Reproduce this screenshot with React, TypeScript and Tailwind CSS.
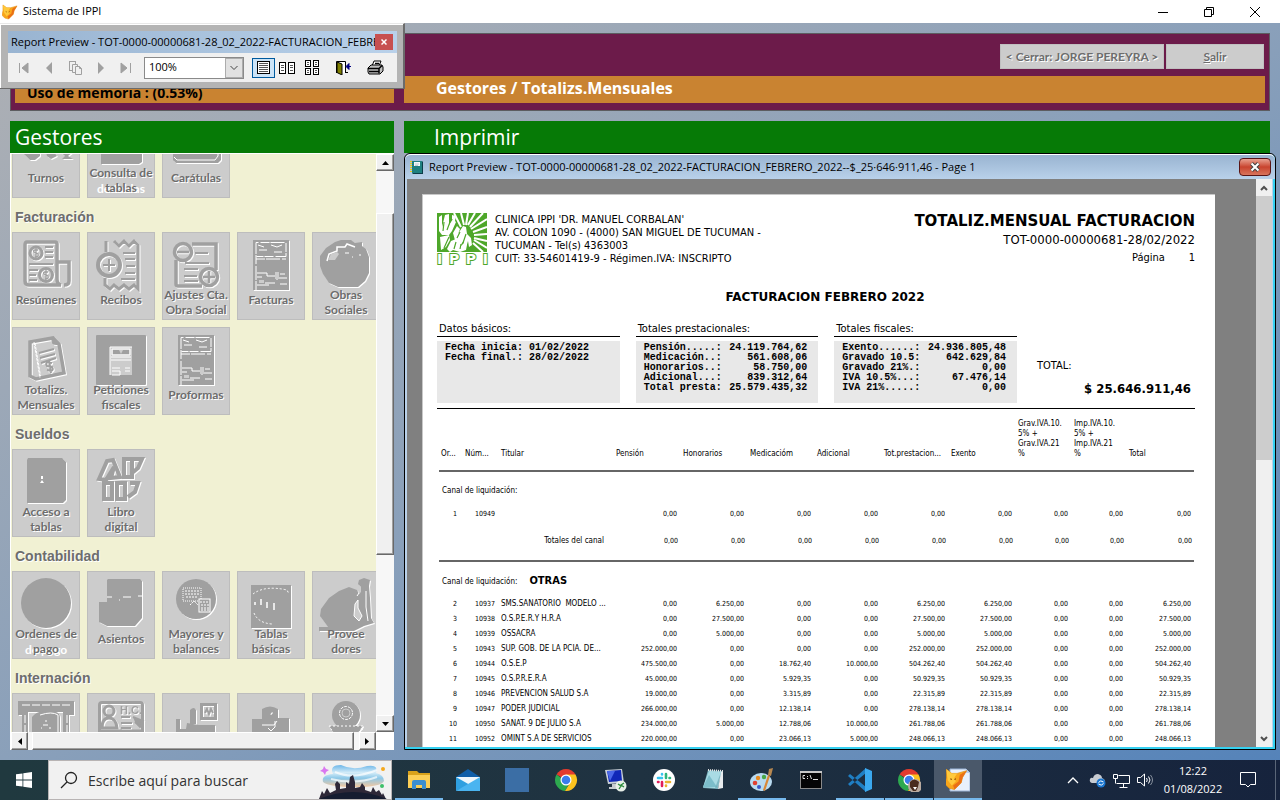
import React from "react";

type Tile = { label: string[]; ghost?: string; icon: React.ReactNode };
type Section = { title?: string; tiles: Tile[] };

const G = "#a0a0a0";
const W = "#ffffff";
const BG = "#cccccc";

const InvoiceIcon = (
  <g>
    <rect x="16" y="8" width="36" height="50" fill={G} />
    <path d="M19 58V10.500h30v14H19.500M19 27h30" fill="none" stroke={W} strokeWidth="1" strokeDasharray="9 1 14 2" />
    <path d="M21 13l6 2M22 18h8M34 13l6 2 5-2M37 20h8M20 41h10v3h10M42 46h8M20 45h5M28 51h10M20 53h12M40 40v8M43 52h7M43 42h5" fill="none" stroke={W} strokeWidth="1" />
    <rect x="38" y="40" width="4" height="7" fill={BG} />
    <rect x="22" y="48" width="5" height="3" fill={BG} />
  </g>
);

const sections: Section[] = [
  {
    tiles: [
      {
        label: ["Turnos"],
        icon: <path d="M12 42h16v4l-5 4h-5l-6-6zM34 42h8l3 4-6 3-4-3zM48 42h13l-5 4 5 3H50l3-3z" fill={G} />,
      },
      {
        label: ["Consulta de", "tablas"],
        ghost: "before:absolute before:inset-x-0 before:top-[16px] before:text-white before:content-['de_tablas']",
        icon: <path d="M14 10h41v42l-3 2H14z" fill={G} />,
      },
      {
        label: ["Carátulas"],
        icon: (
          <g>
            <path d="M11 8h48v42l-3 3H14l-3-3z" fill={G} />
            <path d="M12 47l3 3h38l3-4V30" fill="none" stroke={W} />
          </g>
        ),
      },
    ],
  },
  {
    title: "Facturación",
    tiles: [
      {
        label: ["Resúmenes"],
        icon: (
          <g fill="none" stroke={G}>
            <path d="M45 30V12q0-2-2-2H15q-2 0-2 3v36q0 4 4 4h32q-4-1-4-6V30h12v19q0 4-5 4" strokeWidth="3.5" />
            <circle cx="24" cy="21" r="6" strokeWidth="3" />
            <circle cx="34" cy="43" r="6.500" strokeWidth="3" />
            <path d="M26 18h-3q-2 0-1 2l4 2q1 3-3 3M24 16v10M36 40h-3q-2 0-1 2l4 2q1 3-3 3M34 38v10" strokeWidth="1.300" />
            <path d="M33 15h8M33 20h8M33 25h8M17 32h24M17 38h9M17 43h7M17 48h8" strokeWidth="2" />
          </g>
        ),
      },
      {
        label: ["Recibos"],
        icon: (
          <g fill="none" stroke={G}>
            <path d="M19 20V9M27 9l5 5 5-5 5 5 5-5 4 4V57l-4-4-5 4-5-4-5 4-5-4-4 4-5-4V46" strokeWidth="3" />
            <circle cx="22" cy="33" r="11" strokeWidth="4" />
            <path d="M22 27v12M16 33h12M36 21h12M38 27h10M39 34h9M38 41h10M34 47h14" strokeWidth="2" />
          </g>
        ),
      },
      {
        label: ["Ajustes Cta.", "Obra Social"],
        icon: (
          <g fill="none" stroke={G}>
            <path d="M30 12h24v26M14 28v24q0 2 2 2h24" strokeWidth="3.500" />
            <circle cx="21" cy="20" r="8.500" strokeWidth="3.500" />
            <path d="M15 20h12" strokeWidth="2.500" />
            <circle cx="47" cy="45" r="8.500" strokeWidth="3.500" />
            <path d="M41 45h12M47 39v12" strokeWidth="2.500" />
            <path d="M33 21h13M23 31h24M22 37h14M22 44h13M22 49h14" strokeWidth="2" />
          </g>
        ),
      },
      { label: ["Facturas"], icon: InvoiceIcon },
      {
        label: ["Obras", "Sociales"],
        icon: (
          <g>
            <path d="M23 10l6-2h10l4 3 7-1v4l4 3 3 8v16l-4 8-7 6H26l-9-4-6-9-3-8V24l6-8z" fill={G} />
            <path d="M15 29l2-7 8-3v-4h8l2-3 8 3" fill="none" stroke={W} strokeWidth="1.500" />
            <path d="M16 28l3-6 6-2 2 2-4 6z" fill={BG} />
            <path d="M33 21h4M48 22v2M40 25h1" stroke={W} />
          </g>
        ),
      },
      {
        label: ["Totalizs.", "Mensuales"],
        icon: (
          <g fill="none" stroke={G}>
            <path d="M18 15l23-4 6 6 5 29-28 6-6-3z" strokeWidth="3.500" />
            <path d="M22 15l6 36" stroke={W} strokeWidth="1" strokeDasharray="3 1" />
            <path d="M39 10l2 7 7 1z" fill={G} />
            <path d="M27 26l15-4M28 31l15-4M29 36l15-5" strokeWidth="2" />
            <path d="M40 36l-4-1q-3 1-1 4l5 1q2 3-1 4l-4-1M37 33l2 13" strokeWidth="2" />
          </g>
        ),
      },
      {
        label: ["Peticiones", "fiscales"],
        icon: (
          <g>
            <rect x="9" y="8" width="50" height="50" rx="1" fill={G} />
            <rect x="23" y="20" width="22" height="28" fill={BG} />
            <path d="M23 48V20h22M25 28v-6h18v6zM24 30h20M24 33h20M25 41h8M38 41h5M25 44h8v4h-8M38 44h5" fill="none" stroke={W} />
            <path d="M26 23h6l2 4 2-4h6v4H26z" fill={G} />
          </g>
        ),
      },
      { label: ["Proformas"], icon: InvoiceIcon },
    ],
  },
  {
    title: "Sueldos",
    tiles: [
      {
        label: ["Acceso a", "tablas"],
        icon: (
          <g>
            <path d="M16 9h34l4 4v38l-3 3H15V11z" fill={G} />
            <path d="M29 27h2v3h-2zM28 34l2-3 2 3z" fill={W} />
          </g>
        ),
      },
      {
        label: ["Libro", "digital"],
        icon: (
          <g fill="none" stroke={G} strokeWidth="4">
            <path d="M12 30l8-18 6-1 7 17-9 1 3-11-8 13z" />
            <path d="M37 10h8v18h-8zM47 10h8l-4 9-6 5M17 34h8v16h-8zM30 34h8v16h-8zM43 34h8l-3 9-7 5" />
          </g>
        ),
      },
    ],
  },
  {
    title: "Contabilidad",
    tiles: [
      {
        label: ["Ordenes de", "pago"],
        ghost: "before:absolute before:inset-x-0 before:top-[16px] before:text-white before:content-['de_pago']",
        icon: <circle cx="34" cy="32" r="25" fill={G} />,
      },
      {
        label: ["Asientos"],
        icon: (
          <g>
            <path d="M21 8h32l2 2v37l-7 8H20l-8-4V31h8V9z" fill={G} />
            <path d="M20 26h5M32 29h1M36 26h8M51 25h4" stroke={W} />
          </g>
        ),
      },
      {
        label: ["Mayores y", "balances"],
        icon: (
          <g>
            <circle cx="34" cy="28" r="20" fill={G} />
            <rect x="21" y="17" width="18" height="13" fill="none" stroke={W} strokeDasharray="1 1" />
            <path d="M23 20h14M23 23h14M24 26h12M28 34l4-4 4 4" fill="none" stroke={W} strokeDasharray="2 1" />
            <rect x="37" y="28" width="11" height="13" fill={G} stroke={W} />
            <path d="M38 31h9M39 34h8M39 37h8M39 39h8" stroke={W} strokeDasharray="2 1" />
          </g>
        ),
      },
      {
        label: ["Tablas", "básicas"],
        icon: (
          <g>
            <rect x="14" y="14" width="40" height="43" fill={G} />
            <path d="M16 23q12-9 34-4l2 4" fill="none" stroke={W} strokeDasharray="2 2" />
            <path d="M18 31v3M24 28v6M30 31v6M37 32v7" stroke={W} strokeWidth="1.500" />
            <path d="M17 42q4 10 18 11" fill="none" stroke={W} strokeDasharray="2 2" />
          </g>
        ),
      },
      {
        label: ["Provee", "dores"],
        icon: (
          <g>
            <path d="M8 45l1-7 8-11 10-7 10-4 8 3 2 4 2-2v-5l-3-3 1-4 5-2 6 2-1 6 1 12 1 20 3 5-10 3-10 5H7v-4h9z" fill={G} />
            <path d="M43 33l3-4v8l4 8-3 5-5-5z" fill={BG} stroke={W} />
            <path d="M54 20v16l2 14M45 25l2-3" fill="none" stroke={W} />
          </g>
        ),
      },
    ],
  },
  {
    title: "Internación",
    tiles: [
      {
        label: [],
        icon: (
          <g>
            <path d="M6 8h56v14h-5v34h-6V19H16v37h-6V22H6z" fill={G} />
            <path d="M10 12h48M13 22v34M55 22v34" stroke={W} strokeDasharray="8 2" />
            <path d="M20 24q5-6 12-5h12q4 1 4 6v31H20z" fill={G} />
            <path d="M28 22q12-4 18 0v34M34 27v2M31 32h5M29 35h1M37 35h2" fill="none" stroke={W} />
          </g>
        ),
      },
      {
        label: [],
        icon: (
          <g>
            <path d="M12.500 56V12q0-2.500 2.500-2.500h38q2.500 0 2.500 2.500v44M12 38h44" fill="none" stroke={G} strokeWidth="3" />
            <circle cx="22" cy="18" r="5" fill="none" stroke={G} strokeWidth="3" />
            <path d="M15 35q0-10 7-10t8 10z" fill="none" stroke={G} strokeWidth="3" />
            <text x="33" y="21" fill={G} fontSize="11" fontWeight="700" fontFamily="Liberation Sans, sans-serif">H.C.</text>
            <path d="M34 24h9M34 30h11M34 35h10M46 24l10 4-3 6-5-5" fill={G} stroke={G} strokeWidth="2" />
          </g>
        ),
      },
      {
        label: [],
        icon: (
          <g>
            <path d="M14 26h4v10h6l1-6 12 2h16v24H14z" fill={G} />
            <path d="M28 17q4-4 6 0v14h-6z" fill={G} />
            <rect x="39.500" y="11.500" width="14" height="14" fill="none" stroke={G} strokeWidth="3" />
            <path d="M43 20l2-4 2 5 2-5 2 4" fill="none" stroke={G} strokeWidth="2" />
          </g>
        ),
      },
      {
        label: [],
        icon: (
          <g>
            <path d="M25 16q8-5 16 0v9h11v31H15V26h10z" fill={G} />
            <path d="M25 32h12l3-4M31 35l3 3 4-4v-6M34 22q0-3 2-2" fill="none" stroke={W} />
          </g>
        ),
      },
      {
        label: [],
        icon: (
          <g>
            <circle cx="34" cy="22" r="14" fill={G} />
            <circle cx="34" cy="20" r="6.500" fill={G} stroke={W} strokeDasharray="3 1" />
            <circle cx="34" cy="20" r="4" fill={G} stroke={BG} />
            <path d="M17 33h34l-4 6 4 6H17l4-6z" fill={G} stroke={W} strokeDasharray="2 2" />
          </g>
        ),
      },
    ],
  },
];

function TileButton({ tile }: { tile: Tile }) {
  const single = tile.label.length === 1;
  return (
    <button className="flex h-[88px] w-[68px] shrink-0 flex-col border border-[#bdbdbd] bg-[#cccccc]">
      <svg viewBox="1 1 66 54" className="h-[54px] w-full shrink-0 overflow-visible [filter:drop-shadow(1px_1px_0_#fff)]">
        {tile.icon}
      </svg>
      <div className={"relative w-full text-center font-[Lato,sans-serif] text-[12px] leading-[15px] font-bold whitespace-nowrap text-[#6d6d6d] " + (single ? "pt-[5px] " : "") + (tile.ghost ?? "")}>
        <div className="relative [text-shadow:1px_1px_0_#fff]">
          {tile.label.map((l) => (
            <div key={l}>{l}</div>
          ))}
        </div>
      </div>
    </button>
  );
}

const bevel = "flex items-center justify-center bg-[#f0f0f0] border border-t-white border-l-white border-r-[#696969] border-b-[#696969] shadow-[inset_-1px_-1px_0_#a0a0a0]";

function Gestores() {
  return (
    <section className="flex w-96 shrink-0 flex-col overflow-hidden">
      <h2 className="h-8 shrink-0 bg-[#067a06] pl-[5px] font-['Open_Sans',sans-serif] text-[21px] leading-8 text-white">Gestores</h2>
      <div className="flex min-h-0 flex-1 border-t border-l border-white bg-[#f1f1d3]">
        <div className="flex min-w-0 flex-1 flex-col">
          <div className="min-h-0 flex-1 overflow-hidden pl-px">
            <div className="-mt-11 flex w-[368px] flex-col">
              {sections.map((s, i) => (
                <div key={i}>
                  {s.title && (
                    <h3 className="flex h-[34px] items-center pl-[3px] pt-1 font-['Liberation_Sans',sans-serif] text-[14px] leading-4 font-bold text-[#6d6d6d] [text-shadow:1px_1px_0_#fff]">
                      {s.title}
                    </h3>
                  )}
                  <div className="flex flex-wrap gap-[7px]">
                    {s.tiles.map((t, j) => (
                      <TileButton key={j} tile={t} />
                    ))}
                  </div>
                </div>
              ))}
            </div>
          </div>
          <div className="flex h-[18px] shrink-0 bg-[#f7f7f7]">
            <button aria-label="Desplazar a la izquierda" className={bevel + " w-[17px]"}>
              <svg width="5" height="7"><path d="M5 0v7L1 3.500z" fill="#000" /></svg>
            </button>
            <div className={bevel + " mr-[5px] ml-1 flex-1"} />
            <button aria-label="Desplazar a la derecha" className={bevel + " w-[17px]"}>
              <svg width="5" height="7"><path d="M0 0v7l4-3.500z" fill="#000" /></svg>
            </button>
          </div>
        </div>
        <div className="flex w-[18px] shrink-0 flex-col bg-[#f7f7f7]">
          <button aria-label="Desplazar arriba" className={bevel + " h-[17px]"}>
            <svg width="7" height="4"><path d="M0 4h7L3.500 0z" fill="#000" /></svg>
          </button>
          <div className="h-[42px]" />
          <div className={bevel + " flex-1"} />
          <div className="h-40" />
          <button aria-label="Desplazar abajo" className={bevel + " h-[17px]"}>
            <svg width="7" height="4"><path d="M0 0h7L3.500 4z" fill="#000" /></svg>
          </button>
          <div className="h-[18px] bg-white" />
        </div>
      </div>
    </section>
  );
}

const z = "0,00";
const rows: string[][] = [
  ["2", "10937", "SMS.SANATORIO  MODELO ...", z, "6.250,00", z, z, "6.250,00", "6.250,00", z, z, "6.250,00"],
  ["3", "10938", "O.S.P.E.R.Y H.R.A", z, "27.500,00", z, z, "27.500,00", "27.500,00", z, z, "27.500,00"],
  ["4", "10939", "OSSACRA", z, "5.000,00", z, z, "5.000,00", "5.000,00", z, z, "5.000,00"],
  ["5", "10943", "SUP. GOB. DE LA PCIA. DE...", "252.000,00", z, z, z, "252.000,00", "252.000,00", z, z, "252.000,00"],
  ["6", "10944", "O.S.E.P", "475.500,00", z, "18.762,40", "10.000,00", "504.262,40", "504.262,40", z, z, "504.262,40"],
  ["7", "10945", "O.S.P.R.E.R.A", "45.000,00", z, "5.929,35", z, "50.929,35", "50.929,35", z, z, "50.929,35"],
  ["8", "10946", "PREVENCION SALUD S.A", "19.000,00", z, "3.315,89", z, "22.315,89", "22.315,89", z, z, "22.315,89"],
  ["9", "10947", "PODER JUDICIAL", "266.000,00", z, "12.138,14", z, "278.138,14", "278.138,14", z, z, "278.138,14"],
  ["10", "10950", "SANAT. 9 DE JULIO S.A", "234.000,00", "5.000,00", "12.788,06", "10.000,00", "261.788,06", "261.788,06", z, z, "261.788,06"],
  ["11", "10952", "OMINT S.A DE SERVICIOS", "220.000,00", z, "23.066,13", "5.000,00", "248.066,13", "248.066,13", z, z, "248.066,13"],
];
const zeros = [z, z, z, z, z, z, z, z, z];
const heads = ["Or...", "Núm...", "Titular", "Pensión", "Honorarios", "Medicacióm", "Adicional", "Tot.prestacion...", "Exento", "Grav.IVA.10.\n5% +\nGrav.IVA.21\n%", "Imp.IVA.10.\n5% +\nImp.IVA.21\n%", "Total"];

function Row({ cells }: { cells: string[] }) {
  return (
    <tr className="h-[15px]">
      {cells.map((c, i) => (
        <td key={i} className={i === 2 ? "text-[8px] whitespace-pre" : i === 11 ? "pr-[3px] text-right" : "pr-[6px] text-right"}>
          {c}
        </td>
      ))}
    </tr>
  );
}

function SummaryBox({ title, lines }: { title: string; lines: [string, string][] }) {
  return (
    <div className="flex-1">
      <div className="h-4 border-b border-black px-[2px] text-[11px] leading-4">{title}</div>
      <dl className="mt-1 h-[62px] bg-[#e8e8e8] pt-[2px] pr-[11px] pl-2 font-['Liberation_Mono',monospace] text-[10px] leading-[10px] font-bold">
        {lines.map(([a, b]) => (
          <div key={a} className="flex justify-between">
            <dt>{a}</dt>
            <dd>{b}</dd>
          </div>
        ))}
      </dl>
    </div>
  );
}

function Report() {
  return (
    <article className="mt-[15px] mr-[41px] ml-[15px] min-w-0 flex-1 overflow-hidden border-t border-l border-[#c8c8c8] bg-white pt-[18px] pr-5 pl-[14px] font-['DejaVu_Sans_Condensed','DejaVu_Sans',sans-serif] text-black">
      <header className="flex h-14">
        <div className="w-[51px] shrink-0">
          <svg viewBox="0 0 50 39" className="h-[39px] w-[50px]">
            <rect width="50" height="39" fill="#4ea72a" />
            <path d="M24 14L17 0M27 12L24 0M29 12L31 0M31 12L38 0M33 14L46 0M34 16L50 6M36 19l14-5M37 22l13-1M37 25l13 3M37 27l13 8M36 30l10 9" stroke="#fff" strokeWidth="2" />
            <path d="M2 18V4l3-2v12l3-12 4-1v11l4-6 3 3-4 9-3 4H5zM15 2l4 1-1 5-3-2z" fill="#fff" />
            <path d="M16 20l4-7 3 3-2 5 5-8 3 1 1 7 4 4 1 7-3 2-1-6-2 7-3-1 1-7-4 6-4-2zM3 24l9-2 1 5-4 7-5 3zM14 28l5-2 1 4 2-3 3 1-1 5 3-3 3 2-1 5-6 2-7-2-3 2-3-3z" fill="#fff" />
            <path d="M6 18l1-9M10 17l3-8M20 25l3-6M26 30l3-9M7 35l5-11M17 36l2-7M23 36l1-5" fill="none" stroke="#4ea72a" strokeWidth="1.200" />
          </svg>
          <div className="flex justify-between font-['DejaVu_Sans',sans-serif] text-[14px] leading-[15px] font-bold text-white [-webkit-text-stroke:2px_#4ea72a] [paint-order:stroke_fill]">
            <span>I</span>
            <span>P</span>
            <span>P</span>
            <span>I</span>
          </div>
        </div>
        <address className="pl-[7px] text-[11px] leading-[13px] whitespace-nowrap not-italic">
          CLINICA IPPI 'DR. MANUEL CORBALAN'
          <br />
          AV. COLON 1090 - (4000) SAN MIGUEL DE TUCUMAN -
          <br />
          TUCUMAN - Tel(s) 4363003
          <br />
          CUIT: 33-54601419-9 - Régimen.IVA: INSCRIPTO
        </address>
        <div className="ml-auto text-right whitespace-nowrap">
          <h1 className="font-['DejaVu_Sans',sans-serif] text-[15px] leading-[17px] font-bold">TOTALIZ.MENSUAL FACTURACION</h1>
          <p className="text-[13px] leading-5">TOT-0000-00000681-28/02/2022</p>
          <p className="text-[11px] leading-4">
            Página <span className="inline-block w-[27px]">1</span>
          </p>
        </div>
      </header>
      <h2 className="mt-[18px] pl-[18px] text-center font-['DejaVu_Sans',sans-serif] text-[12px] leading-5 font-bold">FACTURACION FEBRERO 2022</h2>
      <div className="mt-[14px] flex h-[88px] gap-4 border-b border-black">
        <SummaryBox title="Datos básicos:" lines={[["Fecha inicia: 01/02/2022", ""], ["Fecha final.: 28/02/2022", ""]]} />
        <SummaryBox title="Totales prestacionales:" lines={[["Pensión.....:", "24.119.764,62"], ["Medicación..:", "561.608,06"], ["Honorarios..:", "58.750,00"], ["Adicional...:", "839.312,64"], ["Total presta:", "25.579.435,32"]]} />
        <SummaryBox title="Totales fiscales:" lines={[["Exento......:", "24.936.805,48"], ["Gravado 10.5:", "642.629,84"], ["Gravado 21%.:", "0,00"], ["IVA 10.5%...:", "67.476,14"], ["IVA 21%.....:", "0,00"]]} />
        <div className="w-[162px] shrink-0 pt-[38px] pl-1">
          <p className="text-[11px] leading-[14px]">TOTAL:</p>
          <p className="mt-2 pr-1 text-right text-[13px] leading-4 font-bold whitespace-pre">$ 25.646.911,46</p>
        </div>
      </div>
      <div className="pr-px pl-[2px]">
        <table className="w-full table-fixed text-[7px] leading-[10px] whitespace-nowrap">
          <colgroup>
            <col className="w-[24px]" />
            <col className="w-[38px]" />
            <col className="w-[115px]" />
            <col />
            <col />
            <col />
            <col />
            <col />
            <col />
            <col className="w-[56px]" />
            <col className="w-[55px]" />
            <col className="w-[65px]" />
          </colgroup>
          <thead>
            <tr className="h-[62px] border-b-2 border-[#666]">
              {heads.map((h, i) => (
                <th key={i} scope="col" className={"pb-[11px] text-left align-bottom text-[8px] leading-[10px] font-normal whitespace-pre " + (i < 2 ? "pl-[2px]" : "")}>
                  {h}
                </th>
              ))}
            </tr>
          </thead>
          <tbody>
            <tr className="h-[35px]">
              <td colSpan={12} className="pt-1 pl-[3px] text-[8px]">Canal de liquidación:</td>
            </tr>
            <Row cells={["1", "10949", "", ...zeros]} />
            <tr className="h-10 border-b-2 border-[#666]">
              <td colSpan={3} className="pr-3 text-right text-[8px]">Totales del canal</td>
              {zeros.map((c, i) => (
                <td key={i} className={i === 8 ? "pr-[2px] text-right" : "pr-[5px] text-right"}>{c}</td>
              ))}
            </tr>
            <tr className="h-[35px]">
              <td colSpan={12} className="pt-1 pl-[3px] text-[8px]">
                Canal de liquidación:
                <b className="pl-3 text-[11px]">OTRAS</b>
              </td>
            </tr>
            {rows.map((r) => (
              <Row key={r[1]} cells={r} />
            ))}
          </tbody>
        </table>
      </div>
    </article>
  );
}

const reportName = "Report Preview - TOT-0000-00000681-28_02_2022-FACTURACION_FEBRERO_2022--$_25·646·911,46 - Page 1";

function Imprimir() {
  return (
    <section className="flex min-w-0 flex-1 flex-col">
      <h2 className="mr-[6px] h-8 shrink-0 bg-[#067a06] pl-[30px] font-['Open_Sans',sans-serif] text-[21px] leading-8 text-white">Imprimir</h2>
      <div className="flex min-h-0 flex-1 flex-col overflow-hidden rounded-t-md border border-black bg-[#b9d1ea] shadow-[inset_-2px_-2px_0_#35d0f0]">
        <div className="flex h-[25px] shrink-0 items-center rounded-t-md border-t border-white bg-linear-to-b from-[#99b4d1] to-[#b9d1ea] pr-1 pl-1 font-['Open_Sans',sans-serif] text-[11px]">
          <svg viewBox="0 0 16 16" className="h-4 w-4">
            <path d="M3 2h10v12H3z" fill="#1f8080" />
            <path d="M13 2l1 1v12H4l-1-1h10z" fill="#0c3c48" />
            <path d="M5 3h6v4H5z" fill="#f4fafa" />
            <path d="M6 5h4M6 6.500h3" stroke="#9ab" strokeWidth=".6" />
            <path d="M2 2v12" stroke="#e8cc10" strokeWidth="2" strokeDasharray="1 1" />
          </svg>
          <span className="min-w-0 flex-1 truncate pl-1">{reportName}</span>
          <button aria-label="Cerrar vista previa" className="flex h-[18px] w-8 items-center justify-center rounded-sm border border-[#5a1515] bg-linear-to-b from-[#e8a090] via-[#c8432e] to-[#d8745c]">
            <svg width="12" height="10" viewBox="0 0 12 10"><path d="M2.500 1.500l7 7M9.500 1.500l-7 7" stroke="#444" strokeWidth="4" /><path d="M2.500 1.500l7 7M9.500 1.500l-7 7" stroke="#fff" strokeWidth="2" /></svg>
          </button>
        </div>
        <div className="mr-[3px] mb-[2px] ml-[2px] flex min-h-0 flex-1 bg-[#808080]">
          <Report />
          <div className="flex w-4 shrink-0 flex-col bg-[#f0f0f0]">
            <button aria-label="Subir" className="flex h-[17px] items-center justify-center">
              <svg width="8" height="6" viewBox="0 0 8 6"><path d="M1 5l3-3 3 3" fill="none" stroke="#505050" strokeWidth="2" /></svg>
            </button>
            <div className="h-[264px] bg-[#cdcdcd]" />
            <button aria-label="Bajar" className="mt-auto flex h-[17px] items-center justify-center">
              <svg width="8" height="6" viewBox="0 0 8 6"><path d="M1 1l3 3 3-3" fill="none" stroke="#505050" strokeWidth="2" /></svg>
            </button>
          </div>
        </div>
      </div>
    </section>
  );
}

function PageGlyph({ x, y, w, h }: { x: number; y: number; w: number; h: number }) {
  return <rect x={x + 0.5} y={y + 0.5} width={w} height={h} fill="#fff" stroke="#000" />;
}

function PreviewToolbar() {
  const tool = "flex h-5 w-[25px] items-center justify-center";
  return (
    <div className="absolute top-0 left-0 w-[405px] border-t border-r-2 border-b border-t-[#e8e8e8] border-r-[#6b6b6b] border-b-[#6b6b6b] bg-[#b4b4b4] pt-[7px] pr-[6px] pb-[6px] pl-[8px] font-['Open_Sans',sans-serif] text-[11px] shadow-[inset_1px_1px_0_#fff]">
      <div className="flex h-[22px] items-center bg-linear-to-r from-[#99b4d1] to-[#b9d1ea] pr-1 pl-[3px]">
        <span className="min-w-0 flex-1 overflow-hidden whitespace-nowrap">{reportName}</span>
        <button aria-label="Cerrar" className="flex h-4 w-[18px] shrink-0 items-center justify-center bg-[#c75050]">
          <svg width="6" height="6"><path d="M.5.5l5 5M5.500.5l-5 5" stroke="#fff" strokeWidth="1.500" /></svg>
        </button>
      </div>
      <div className="flex h-[29px] items-center bg-[#f0f0f0] pl-[3px]">
        <button aria-label="Primera" className={tool}>
          <svg width="12" height="12"><path d="M1.500 1v10M10 1v10L4 6z" fill={G} stroke={G} strokeWidth="1" /></svg>
        </button>
        <button aria-label="Anterior" className={tool}>
          <svg width="8" height="12"><path d="M7 0v12L1 6z" fill={G} /></svg>
        </button>
        <button aria-label="Ir a página" className={tool + " ml-[2px]"}>
          <svg width="14" height="14" fill="#f0f0f0" stroke={G}><rect x=".5" y=".5" width="6" height="9" /><path d="M3.500 3.500h5v8h-5z" /><path d="M6.500 5.500h4l2 2v6h-6zM10.500 5.500v2h2" /></svg>
        </button>
        <button aria-label="Siguiente" className={tool}>
          <svg width="8" height="12"><path d="M1 0v12l6-6z" fill={G} /></svg>
        </button>
        <button aria-label="Última" className={tool}>
          <svg width="12" height="12"><path d="M10.500 1v10M1 1v10l6-5z" fill={G} stroke={G} strokeWidth="1" /></svg>
        </button>
        <div className="relative ml-[6px]">
          <select aria-label="Zoom" defaultValue="100%" className="h-[22px] w-[100px] appearance-none border border-[#8a8a8a] bg-white pl-1">
            <option>100%</option>
          </select>
          <div className="pointer-events-none absolute top-px right-px flex h-5 w-[18px] items-center justify-center border border-[#acacac] bg-[#e1e1e1]">
            <svg width="8" height="6"><path d="M.5 1l3.500 3.500L7.500 1" fill="none" stroke="#444" /></svg>
          </div>
        </div>
        <button aria-label="Una página" className="ml-2 flex h-5 w-[23px] items-center justify-center border border-[#005a9e] bg-[#cce4f7]">
          <svg width="13" height="13"><PageGlyph x={0} y={0} w={12} h={12} /><path d="M2 2.500h9M2 4.500h9M2 6.500h9M2 8.500h9M2 10.500h9" stroke="#555" /></svg>
        </button>
        <button aria-label="Dos páginas" className={tool}>
          <svg width="17" height="12"><PageGlyph x={0} y={0} w={6} h={11} /><PageGlyph x={9} y={0} w={6} h={11} /><path d="M2 3.500h3M2 5.500h3M2 8.500h3M11 3.500h3M11 5.500h3M11 8.500h3" stroke="#555" /></svg>
        </button>
        <button aria-label="Cuatro páginas" className={tool}>
          <svg width="15" height="15"><PageGlyph x={0} y={0} w={5} h={6} /><PageGlyph x={8} y={0} w={5} h={6} /><PageGlyph x={0} y={8} w={5} h={6} /><PageGlyph x={8} y={8} w={5} h={6} /><path d="M2 2.500h2M2 4.500h2M10 2.500h2M10 4.500h2M2 10.500h2M2 12.500h2M10 10.500h2M10 12.500h2" stroke="#555" /></svg>
        </button>
        <button aria-label="Cerrar vista" className={tool + " ml-[6px]"}>
          <svg width="16" height="14"><path d="M.5 12V.5h9V12" fill="#fff" stroke="#000" /><path d="M1 1l5 2v11l-5-2.500z" fill="#808000" stroke="#000" /><path d="M11 5.500h4M13 2.500L10 5.500l3 3z" fill="#000080" stroke="#000080" /><path d="M9 11.500h3" stroke="#000" /></svg>
        </button>
        <button aria-label="Imprimir" className={tool + " ml-[7px]"}>
          <svg width="17" height="15"><path d="M5 6l2-5h7l-2 5z" fill="#fff" stroke="#000" /><path d="M1 8l3-3h11l1 2v4l-3 3H2l-1-2z" fill="#c0c0c0" stroke="#000" /><path d="M1 8.500h11l3-3M2 11.500h10v2M12 9v3M8 3.500h4" fill="none" stroke="#000" strokeWidth="1.500" /></svg>
        </button>
      </div>
    </div>
  );
}

const Fox = (
  <g>
    <path d="M1 1l4 3h4l7-2-3 5-1 4-5 5-4-1-3-3 1-5z" fill="#f9a61a" stroke="#e08a10" strokeWidth=".5" />
    <path d="M16 2l-3 5-1 4-5 5-1-3 4-3 1-5z" fill="#ea6f16" />
    <path d="M1 1l4 3h4L7 7l1 3-3 3-3-4z" fill="#ffc93c" />
    <path d="M4 8l1 .5M7 8.500l1-.5" stroke="#7a3c00" strokeWidth=".8" />
  </g>
);

function ChromeMark() {
  return (
    <g>
      <path d="M12 12L2.500 6.500A11 11 0 0 1 21.500 6.500z" fill="#e33b2e" />
      <path d="M12 12h-2L2.500 6.500A11 11 0 0 0 11 23l5-9z" fill="#2da94f" />
      <path d="M12 6.500h9.500A11 11 0 0 1 11 23l5.500-9z" fill="#fcc31e" />
      <circle cx="12" cy="12" r="5.500" fill="#fff" />
      <circle cx="12" cy="12" r="4.300" fill="#3b7ded" />
    </g>
  );
}

const taskIcons: { name: string; open?: boolean; active?: boolean; icon: React.ReactNode }[] = [
  {
    name: "Explorador de archivos", open: true,
    icon: <g><path d="M1 3h9l2 2h11v3H1z" fill="#d9a21b" /><path d="M1 7h22v13H1z" fill="#fccf56" /><path d="M5 21v-7q0-2 2-2h10q2 0 2 2v7h-4v-4H9v4z" fill="#3c8fd0" /></g>,
  },
  {
    name: "Correo",
    icon: <g><path d="M0 9l12-8 12 8v4H0z" fill="#0f5ea8" /><path d="M0 9h24v8H0z" fill="#eef6fb" /><path d="M0 9l14 8L0 23z" fill="#2f9fe0" /><path d="M24 9L0 23h24z" fill="#4ab4f0" /></g>,
  },
  { name: "Aplicación", icon: <rect width="24" height="24" fill="#3b6ea5" /> },
  { name: "Chrome", icon: <ChromeMark /> },
  {
    name: "Escritorio remoto",
    icon: <g><path d="M2 2l17-1 2 14-16 1z" fill="#c9d0d8" /><path d="M4 3l14-1 1 11-13 1z" fill="#1028b8" /><path d="M4 3h8L7 13z" fill="#4a68e8" /><path d="M9 16h5v3h5v2H6v-2h3z" fill="#c8ccd0" /><circle cx="18" cy="18" r="5.500" fill="#e8f0e8" /><path d="M15 16l3 2-2 3M21 15l-3 2 3 2" fill="none" stroke="#2a8a3a" strokeWidth="1.300" /></g>,
  },
  {
    name: "Slack",
    icon: (
      <g fill="none" strokeWidth="2.600" strokeLinecap="round">
        <circle cx="12" cy="12" r="11" fill="#fff" />
        <path d="M10 6v.500M6 10h4" stroke="#36c5f0" />
        <path d="M14 6v4M18 10h-.500" stroke="#2eb67d" />
        <path d="M14 14h4M14 18v-.500" stroke="#ecb22e" />
        <path d="M6 14h.500M10 14v4" stroke="#e01e5a" />
      </g>
    ),
  },
  {
    name: "Bloc de notas",
    icon: <g><path d="M7 2l14 1-4 18-15-1z" fill="#7fb8c4" /><path d="M8 3l12 1-6 16-12-1z" fill="#a9dbe4" /><path d="M22 3v17l-5 1 3-17z" fill="#e8ecee" /><path d="M7 2l15 1" stroke="#e8e8e8" strokeWidth="2" strokeDasharray="1 1" /><path d="M2 19l6-12 8 12z" fill="#4f9fb0" opacity=".5" /></g>,
  },
  {
    name: "Paint", open: true,
    icon: <g><ellipse cx="11" cy="14" rx="11" ry="9" fill="#b8daf0" /><circle cx="5" cy="15" r="2.300" fill="#e04030" /><circle cx="8" cy="10" r="2.200" fill="#e88a20" /><circle cx="14" cy="9" r="2.200" fill="#48a848" /><circle cx="9" cy="19" r="2" fill="#3858c8" /><path d="M13 22l5-15 2 1-5 15z" fill="#d88838" /><path d="M18 7l1-6 4-1-2 8z" fill="#b88850" /></g>,
  },
  {
    name: "Símbolo del sistema",
    icon: <g><rect x="1.500" y="3.500" width="21" height="17" fill="#050505" stroke="#8a8a8a" /><path d="M1 4h22" stroke="#c8c8c8" strokeWidth="2" /><path d="M6 7.500H4v3h2M8.500 8v1M8.500 10v1M11 7l1.500 4M14 11.500h5" stroke="#ddd" fill="none" /></g>,
  },
  {
    name: "Visual Studio Code", open: true,
    icon: <g><path d="M0 8l2-2 16 13v5zM0 16l2 2L18 5V0z" fill="#1f7fc4" /><path d="M17 0l7 3v18l-7 3z" fill="#3ba9f0" /></g>,
  },
  {
    name: "Chrome, perfil", open: true,
    icon: <g><ChromeMark /><circle cx="18" cy="18" r="7" fill="#b9aaa0" /><path d="M13 14q4-5 9 0l-1 5-2 4h-3l-3-4z" fill="#4a2c1e" /><path d="M16 19h4l-2 3z" fill="#fff" /></g>,
  },
  {
    name: "Sistema de IPPI", open: true, active: true,
    icon: <g><path d="M4 1h16l4 4v18H4z" fill="#e8f0fc" stroke="#9ab4d8" /><path d="M20 1v4h4" fill="#b8cce8" /><g transform="translate(-1 0) scale(1.350)">{Fox}</g></g>,
  },
];

function Taskbar() {
  return (
    <footer className="flex h-10 shrink-0 items-stretch bg-linear-to-r from-[#20393f] via-[#1f3241] to-[#16233d] font-['Open_Sans',sans-serif] text-white">
      <button aria-label="Inicio" className="flex w-12 items-center justify-center">
        <svg width="16" height="16" viewBox="0 0 16 16"><path d="M0 2.300l6.500-.9v6.100H0zM7.300 1.300L16 0v7.500H7.300zM0 8.400h6.500v6.200L0 13.700zM7.300 8.400H16V16l-8.700-1.200z" fill="#fff" /></svg>
      </button>
      <label className="relative mr-[3px] flex w-[344px] items-center overflow-hidden border border-[#b8b4b4] bg-[#f1f1f1] pl-[11px]">
        <svg width="18" height="18" viewBox="0 0 18 18"><circle cx="11" cy="7" r="5.500" fill="none" stroke="#222" strokeWidth="1.300" /><path d="M7 11l-6 6" stroke="#222" strokeWidth="1.300" /></svg>
        <input aria-label="Buscar" placeholder="Escribe aquí para buscar" className="min-w-0 flex-1 bg-transparent pl-[10px] text-[14px] text-black placeholder:text-[#333] placeholder:opacity-100" />
        <svg width="74" height="38" viewBox="0 0 74 38" className="shrink-0">
          <defs>
            <linearGradient id="sky" x1="0" y1="0" x2="0" y2="1">
              <stop offset="0" stopColor="#6db6e8" />
              <stop offset=".35" stopColor="#d4ecf8" />
              <stop offset=".6" stopColor="#8cc8e8" />
              <stop offset="1" stopColor="#f4c8a0" />
            </linearGradient>
          </defs>
          <path d="M6 21Q4 14 16 13 12 4 24 4q12 6 26 1 12-2 9 7 8 2 8 8-3 6-29 6-26 0-32-5z" fill="url(#sky)" />
          <path d="M18 11q18 8 42-2M14 18q24 6 46-2" fill="none" stroke="#fff" strokeWidth="2" opacity=".7" />
          <path d="M7 5l2 3 3 1-3 2-1 3-2-3-3-1 3-2z" fill="#d977f0" />
          <circle cx="66" cy="8" r="2" fill="#f5a81c" />
          <circle cx="65" cy="25" r="2" fill="#3fc06a" />
          <path d="M2 38l3-8 2 3 3-6 3 5 6-3-1-6 2-3 3 3v5l6-1v-6l3 2 1-7 3-2 2 7v6l5-1 2-4 3 4v3l6 2 2-5 3 5 3-2 3 5 1-2 3 6z" fill="#2e2838" />
          <path d="M2 38q34-14 68 0z" fill="#151c30" />
        </svg>
      </label>
      <nav className="flex gap-px">
        {taskIcons.map((t) => (
          <button key={t.name} aria-label={t.name} className={"flex w-12 items-center justify-center " + (t.active ? "bg-[#4a586a] " : "") + (t.open ? "shadow-[inset_0_-2px_0_#76b9ed]" : "")}>
            <svg width="24" height="24" viewBox="0 0 24 24">{t.icon}</svg>
          </button>
        ))}
      </nav>
      <div className="ml-auto flex items-center pr-1">
        <button aria-label="Iconos ocultos" className="flex w-6 justify-center">
          <svg width="12" height="8"><path d="M1 7l5-5 5 5" fill="none" stroke="#fff" strokeWidth="1.300" /></svg>
        </button>
        <button aria-label="OneDrive" className="flex w-6 justify-center">
          <svg width="17" height="16" viewBox="0 0 17 16"><path d="M3 11q-3-1-2-4 1-2 3-1 1-4 5-4 4 1 4 4 3 1 3 4l-2 1z" fill="#c8ccd2" /><circle cx="12" cy="11" r="4.500" fill="#1a76d0" /><path d="M9.500 10.500q2-3 5-.500M14.500 11.500q-2 3-5 .500" fill="none" stroke="#fff" /></svg>
        </button>
        <button aria-label="Red" className="flex w-6 justify-center">
          <svg width="17" height="15" fill="none" stroke="#fff"><path d="M5.500 2.500h11v8h-13M.5 1.500h4v4h-4zM2.500 5v5.500M10.500 11v3M6.500 14.500h8" /></svg>
        </button>
        <button aria-label="Volumen" className="flex w-6 justify-center">
          <svg width="17" height="14" viewBox="0 0 17 14" fill="none" stroke="#fff"><path d="M.5 4.500h3l4-3.500v12L3.500 9.500h-3zM9.500 5q1.500 2 0 4M11.500 3.500q3 3.500 0 7" /><path d="M13.500 2q4 5 0 10" stroke="#8a93a0" /></svg>
        </button>
        <time className="w-[72px] text-center text-[11px] leading-[18px]">
          12:22
          <br />
          01/08/2022
        </time>
        <button aria-label="Notificaciones" className="mr-[10px] flex w-9 justify-center pl-[2px]">
          <svg width="16" height="16" fill="none" stroke="#fff"><path d="M.5.5h15v12h-5l-2.500 2.500-2.500-2.500h-5z" /></svg>
        </button>
        <div className="h-10 w-px bg-[#5a6678]" />
      </div>
    </footer>
  );
}

export default function App() {
  const headButton = "h-[25px] bg-[#cccccc] border border-[#c0c0c0] text-[12px] leading-[15px] font-bold font-[Lato,sans-serif] text-[#6d6d6d] [text-shadow:1px_1px_0_#fff]";
  return (
    <div className="flex h-screen flex-col overflow-hidden bg-[#7b98bb]">
      <div className="flex h-[23px] shrink-0 items-center bg-white pr-[2px] pl-[2px] font-['Open_Sans',sans-serif] text-[11px] text-black">
        <svg width="16" height="16" viewBox="0 0 17 17">{Fox}</svg>
        <span className="flex-1 pl-[5px]">Sistema de IPPI</span>
        <button aria-label="Minimizar" className="flex w-[46px] justify-center">
          <svg width="10" height="10"><path d="M0 5.500h10" stroke="#000" /></svg>
        </button>
        <button aria-label="Restaurar" className="flex w-[46px] justify-center">
          <svg width="10" height="10" fill="none" stroke="#000"><path d="M.5 2.500h7v7h-7zM2.500 2.500v-2h7v7h-2" /></svg>
        </button>
        <button aria-label="Cerrar ventana" className="flex w-[46px] justify-center">
          <svg width="10" height="10"><path d="M0 0l10 10M10 0L0 10" stroke="#000" /></svg>
        </button>
      </div>
      <main className="relative flex min-h-0 flex-1 flex-col gap-[10px] bg-linear-[150deg] from-[#aeb0b4] via-[#8aa0ba] to-[#5583b9] pt-[10px] pr-1 pb-[10px] pl-[10px]">
        <header className="mr-[6px] flex h-[78px] shrink-0 flex-col border border-[#5c5c60] bg-[#6c1b4a] pr-1 pl-1">
          <div className="flex h-[42px] shrink-0 items-start justify-end gap-[2px] pt-[10px] pr-px">
            <button className={headButton + " w-[164px]"}>&lt; Cerrar: JORGE PEREYRA &gt;</button>
            <button className={headButton + " w-[98px]"}>
              <u>S</u>alir
            </button>
          </div>
          <div className="flex h-[27px] shrink-0 gap-[10px] font-['Open_Sans',sans-serif] font-bold">
            <div className="w-[379px] shrink-0 bg-[#c98331] pt-2 pl-3 text-[14px] leading-[18px] text-black">Uso de memoria : (0.53%)</div>
            <div className="flex-1 bg-[#c98331] pl-8 text-[16px] leading-6 text-white">Gestores / Totalizs.Mensuales</div>
          </div>
        </header>
        <div className="flex min-h-0 flex-1 gap-[10px]">
          <Gestores />
          <Imprimir />
        </div>
        <PreviewToolbar />
      </main>
      <Taskbar />
    </div>
  );
}
